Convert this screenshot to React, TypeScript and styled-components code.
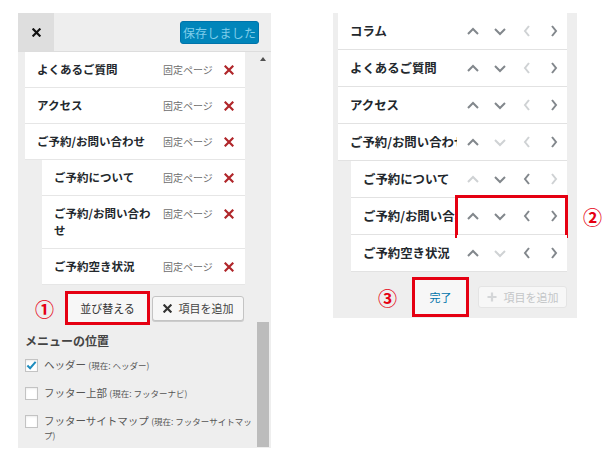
import React from 'react';
import styled, { createGlobalStyle } from 'styled-components';

const FONT = `"Noto Sans CJK JP", "Noto Sans", sans-serif`;
const RED = '#e50012';

const Global = createGlobalStyle`
  html, body { margin: 0; padding: 0; background: #fff; }
  body { font-family: ${FONT}; width: 610px; height: 464px; overflow: hidden; color: #23282d; }
  * { box-sizing: border-box; }
`;

const Page = styled.div`
  display: flex;
  align-items: flex-start;
  gap: 62px;
  padding: 13px 0 0 18px;
`;

/* ---------- left panel ---------- */
const LeftPanel = styled.div`
  width: 253px;
  height: 435px;
  background: #eeeeee;
  display: flex;
  flex-direction: column;
`;

const Header = styled.div`
  height: 39px;
  border-bottom: 1px solid #dddddd;
  display: flex;
  align-items: center;
  justify-content: space-between;
`;

const CloseBtn = styled.div`
  width: 36px;
  height: 38px;
  background: #dedede;
  display: flex;
  align-items: center;
  justify-content: center;
`;

const SaveBtn = styled.div`
  margin-right: 12px;
  width: 79px;
  height: 23px;
  background: #0085ba;
  border: 1px solid #0073aa;
  border-radius: 3px;
  color: #7fcdea;
  font-size: 12px;
  display: flex;
  align-items: center;
  justify-content: center;
  letter-spacing: 0.2px;
`;

const Body = styled.div`
  flex: 1;
  display: flex;
  min-height: 0;
`;

const Content = styled.div`
  width: 239px;
  padding: 0 12px 0 7px;
  display: flex;
  flex-direction: column;
`;

const Scrollbar = styled.div`
  width: 14px;
  display: flex;
  flex-direction: column;
  align-items: flex-start;
`;

const ScrollArrow = styled.div`
  margin: 5px 0 0 3px;
  width: 0;
  height: 0;
  border-left: 3.5px solid transparent;
  border-right: 3.5px solid transparent;
  border-bottom: 4px solid #505050;
`;

const Thumb = styled.div`
  margin-top: auto;
  margin-bottom: 1px;
  width: 12px;
  height: 125px;
  background: #bcbcbc;
`;

const List = styled.div`
  display: flex;
  flex-direction: column;
`;

const ItemRow = styled.div<{ $indent: number }>`
  margin-left: ${(p) => p.$indent}px;
  background: #fff;
  border-bottom: 1px solid #e6e6e6;
  display: flex;
  align-items: flex-start;
  padding: 9px 11px 9px 12px;
`;

const ItemTitle = styled.div`
  flex: 1;
  min-width: 0;
  font-size: 11.5px;
  font-weight: 700;
  line-height: 17px;
  color: #23282d;
  margin-right: 6px;
`;

const TypeLabel = styled.span`
  font-size: 10px;
  line-height: 17px;
  color: #6d6d6d;
  width: 50px;
  white-space: nowrap;
`;

const DeleteX = styled.span`
  margin-left: 11px;
  width: 10px;
  height: 17px;
  display: flex;
  align-items: center;
`;

const ButtonRow = styled.div`
  margin-top: 6px;
  display: flex;
  align-items: center;
`;

const Num = styled.span`
  color: ${RED};
  font-size: 19px;
  font-weight: 700;
  line-height: 1;
`;

const RedBox = styled.div<{ $w: number; $h: number }>`
  width: ${(p) => p.$w}px;
  height: ${(p) => p.$h}px;
  border: 3px solid ${RED};
  display: flex;
`;

const PlainBtn = styled.div<{ $color: string }>`
  flex: 1;
  background: #f7f7f7;
  color: ${(p) => p.$color};
  font-size: 11px;
  display: flex;
  align-items: center;
  justify-content: center;
`;

const AddBtn = styled.div<{ $disabled?: boolean }>`
  height: ${(p) => (p.$disabled ? 22 : 25)}px;
  width: ${(p) => (p.$disabled ? 89 : 92)}px;
  border: 1px solid ${(p) => (p.$disabled ? '#e4e4e4' : '#c4c4c4')};
  border-radius: 3px;
  background: #f7f7f7;
  color: ${(p) => (p.$disabled ? '#c4c6c8' : '#444')};
  font-size: 11px;
  display: flex;
  align-items: center;
  justify-content: center;
  gap: 7px;
  box-shadow: ${(p) => (p.$disabled ? 'none' : '0 1px 0 #ccc')};
`;

const SectionTitle = styled.div`
  margin: 7px 0 0 0;
  font-size: 12px;
  font-weight: 700;
  color: #444;
  line-height: 18px;
`;

const CheckList = styled.div`
  margin-top: 8px;
  display: flex;
  flex-direction: column;
  gap: 14px;
`;

const CheckRow = styled.div`
  display: flex;
  align-items: flex-start;
`;

const CheckBox = styled.div`
  width: 13px;
  height: 13px;
  margin-top: 1px;
  flex: none;
  background: #fff;
  border: 1px solid #c3c3c3;
  box-shadow: inset 0 1px 2px rgba(0, 0, 0, 0.08);
  display: flex;
  align-items: center;
  justify-content: center;
`;

const CheckText = styled.div`
  margin-left: 6px;
  font-size: 10.5px;
  line-height: 14px;
  color: #555;
  width: 208px;
  flex: none;
`;

const Small = styled.span`
  font-size: 8.5px;
  color: #555;
`;

/* ---------- right panel ---------- */
const RightPanel = styled.div`
  position: relative;
  width: 244px;
  height: 305px;
  background: #eeeeee;
  padding: 0 10px 0 5px;
  display: flex;
  flex-direction: column;
`;

const ReorderRow = styled.div<{ $indent: number }>`
  margin-left: ${(p) => p.$indent}px;
  height: 37px;
  background: #fff;
  border-bottom: 1px solid #e2e2e2;
  display: flex;
  align-items: center;
  padding-left: 12px;
`;

const ReorderTitle = styled.div`
  flex: 1;
  min-width: 0;
  overflow: hidden;
  white-space: nowrap;
  font-size: 12.4px;
  font-weight: 700;
  line-height: 17px;
  color: #23282d;
`;

const Controls = styled.div`
  position: relative;
  width: 110px;
  height: 100%;
  background: #fff;
  display: flex;
  align-items: center;
  padding-left: 2px;
`;

const Arrow = styled.div`
  width: 27px;
  display: flex;
  justify-content: center;
  align-items: center;
`;

const Outline = styled.div`
  position: absolute;
  top: -3px;
  bottom: -4px;
  left: -2px;
  right: -1px;
  border: 3px solid ${RED};
  pointer-events: none;
`;

const SideNum = styled(Num)`
  position: absolute;
  left: calc(100% + 16px);
  top: 50%;
  transform: translateY(-50%);
`;

const FooterRow = styled.div`
  margin-top: 5px;
  display: flex;
  align-items: center;
  justify-content: flex-end;
`;

/* ---------- icons ---------- */
const DARK = '#82878c';
const LIGHT = '#cfd2d4';

const Chevron = ({ dir, on }: { dir: 'up' | 'down' | 'left' | 'right'; on: boolean }) => {
  const c = on ? DARK : LIGHT;
  if (dir === 'up' || dir === 'down') {
    const pts = dir === 'up' ? '1,7 6,2 11,7' : '1,2 6,7 11,2';
    return (
      <svg width="12" height="9" viewBox="0 0 12 9">
        <polyline points={pts} fill="none" stroke={c} strokeWidth="2" />
      </svg>
    );
  }
  const pts = dir === 'left' ? '6,1 2,6 6,11' : '2,1 6,6 2,11';
  return (
    <svg width="8" height="12" viewBox="0 0 8 12">
      <polyline points={pts} fill="none" stroke={c} strokeWidth="2" />
    </svg>
  );
};

const Cross = ({ size, color, w }: { size: number; color: string; w: number }) => (
  <svg width={size} height={size} viewBox="0 0 10 10">
    <path d="M1.5 1.5 L8.5 8.5 M8.5 1.5 L1.5 8.5" stroke={color} strokeWidth={w} strokeLinecap="square" />
  </svg>
);

const Plus = () => (
  <svg width="10" height="10" viewBox="0 0 10 10">
    <path d="M5 0.5 V9.5 M0.5 5 H9.5" stroke="#d4d6d8" strokeWidth="2.2" />
  </svg>
);

const Tick = () => (
  <svg width="12" height="11" viewBox="0 0 12 11">
    <path d="M1.5 5.5 L4.5 8.5 L10.5 1.5" fill="none" stroke="#1e8cbe" strokeWidth="2.2" />
  </svg>
);

/* ---------- data ---------- */
const leftItems = [
  { t: 'よくあるご質問', i: 0 },
  { t: 'アクセス', i: 0 },
  { t: 'ご予約/お問い合わせ', i: 0 },
  { t: 'ご予約について', i: 17 },
  { t: 'ご予約/お問い合わせ', i: 17 },
  { t: 'ご予約空き状況', i: 17 },
];

type St = [boolean, boolean, boolean, boolean];
const rightItems: { t: string; i: number; s: St; mark?: boolean }[] = [
  { t: 'コラム', i: 0, s: [true, true, false, true] },
  { t: 'よくあるご質問', i: 0, s: [true, true, false, true] },
  { t: 'アクセス', i: 0, s: [true, true, false, true] },
  { t: 'ご予約/お問い合わせ', i: 0, s: [true, false, false, true] },
  { t: 'ご予約について', i: 13, s: [false, true, true, false] },
  { t: 'ご予約/お問い合わせ', i: 13, s: [true, true, true, true], mark: true },
  { t: 'ご予約空き状況', i: 13, s: [true, false, true, true] },
];

const dirs = ['up', 'down', 'left', 'right'] as const;

const locations = [
  { label: 'ヘッダー', now: '(現在: ヘッダー)', checked: true },
  { label: 'フッター上部', now: '(現在: フッターナビ)', checked: false },
  { label: 'フッターサイトマップ', now: '(現在: フッターサイトマップ)', checked: false },
];

export default function App() {
  return (
    <>
      <Global />
      <Page>
        <LeftPanel>
          <Header>
            <CloseBtn>
              <Cross size={9} color="#111" w={2.4} />
            </CloseBtn>
            <SaveBtn>保存しました</SaveBtn>
          </Header>
          <Body>
            <Content>
              <List>
                {leftItems.map((it, k) => (
                  <ItemRow key={k} $indent={it.i}>
                    <ItemTitle>{it.t}</ItemTitle>
                    <TypeLabel>固定ページ</TypeLabel>
                    <DeleteX>
                      <Cross size={10} color="#b0262a" w={2.2} />
                    </DeleteX>
                  </ItemRow>
                ))}
              </List>
              <ButtonRow>
                <Num style={{ marginLeft: 10 }}>①</Num>
                <RedBox $w={85} $h={34} style={{ marginLeft: 11 }}>
                  <PlainBtn $color="#333">並び替える</PlainBtn>
                </RedBox>
                <AddBtn style={{ marginLeft: 2 }}>
                  <Cross size={9} color="#333" w={2.4} />
                  項目を追加
                </AddBtn>
              </ButtonRow>
              <SectionTitle>メニューの位置</SectionTitle>
              <CheckList>
                {locations.map((l, k) => (
                  <CheckRow key={k}>
                    <CheckBox>{l.checked && <Tick />}</CheckBox>
                    <CheckText>
                      {l.label} <Small>{l.now}</Small>
                    </CheckText>
                  </CheckRow>
                ))}
              </CheckList>
            </Content>
            <Scrollbar>
              <ScrollArrow />
              <Thumb />
            </Scrollbar>
          </Body>
        </LeftPanel>

        <RightPanel>
          <List>
            {rightItems.map((it, k) => (
              <ReorderRow key={k} $indent={it.i}>
                <ReorderTitle>{it.t}</ReorderTitle>
                <Controls>
                  {dirs.map((d, j) => (
                    <Arrow key={d}>
                      <Chevron dir={d} on={it.s[j]} />
                    </Arrow>
                  ))}
                  {it.mark && (
                    <>
                      <Outline />
                      <SideNum>②</SideNum>
                    </>
                  )}
                </Controls>
              </ReorderRow>
            ))}
          </List>
          <FooterRow>
            <Num>③</Num>
            <RedBox $w={57} $h={40} style={{ marginLeft: 15 }}>
              <PlainBtn $color="#0073aa">完了</PlainBtn>
            </RedBox>
            <AddBtn $disabled style={{ marginLeft: 9 }}>
              <Plus />
              項目を追加
            </AddBtn>
          </FooterRow>
        </RightPanel>
      </Page>
    </>
  );
}
